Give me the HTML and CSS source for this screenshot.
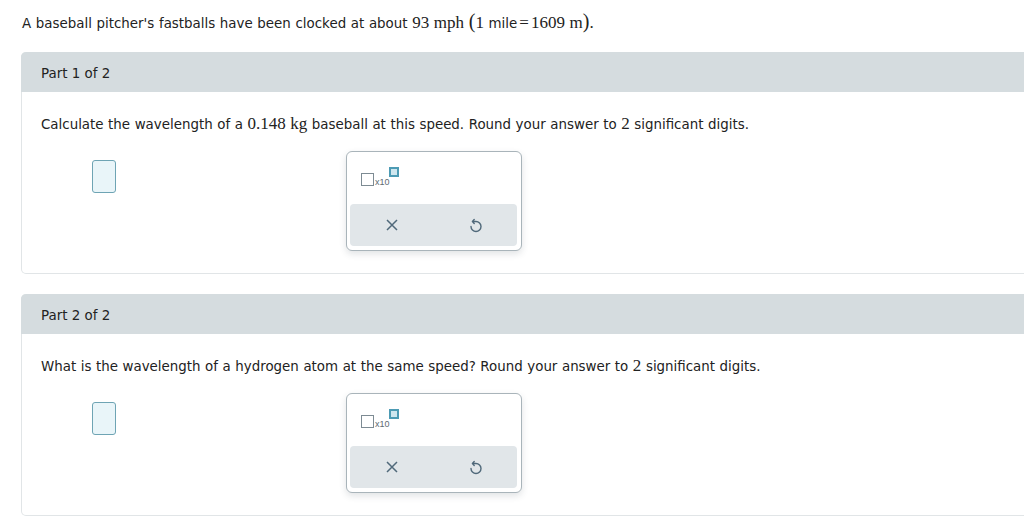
FILE: index.html
```html
<!DOCTYPE html>
<html>
<head>
<meta charset="utf-8">
<link rel="stylesheet" href="styles.css">
</head>
<body>
<p class="intro">A baseball pitcher's fastballs have been clocked at about <span class="m">93 mph</span> <span class="m paren">(</span><span class="m">1</span> mile<span class="m eq">=</span><span class="m">1609 m</span><span class="m paren">)</span><span class="m">.</span></p>

<section class="part">
  <div class="part-head">Part 1 of 2</div>
  <div class="part-body">
    <p class="q">Calculate the wavelength of a <span class="m">0.148 kg</span> baseball at this speed. Round your answer to <span class="m">2</span> significant digits.</p>
    <div class="answer">
      <div class="input"></div>
      <div class="widget">
        <div class="top">
          <div class="sci"><span class="box"></span><span class="x10">x10</span><span class="sup"></span></div>
        </div>
        <div class="bar">
          <div class="btn"><svg width="12" height="12" viewBox="0 0 12 12"><path d="M1 1 L11 11 M11 1 L1 11" stroke="#50697a" stroke-width="1.5" fill="none"/></svg></div>
          <div class="btn"><svg width="14" height="16" viewBox="0 0 14 16"><path d="M3 9.5 A5 5 0 1 0 8 4.5 H4.5 M6.2 2.6 L4.4 4.5 L6.2 6.4" stroke="#50697a" stroke-width="1.4" fill="none" stroke-linecap="round" stroke-linejoin="round"/></svg></div>
        </div>
      </div>
    </div>
  </div>
</section>

<section class="part">
  <div class="part-head">Part 2 of 2</div>
  <div class="part-body">
    <p class="q">What is the wavelength of a hydrogen atom at the same speed? Round your answer to <span class="m">2</span> significant digits.</p>
    <div class="answer">
      <div class="input"></div>
      <div class="widget">
        <div class="top">
          <div class="sci"><span class="box"></span><span class="x10">x10</span><span class="sup"></span></div>
        </div>
        <div class="bar">
          <div class="btn"><svg width="12" height="12" viewBox="0 0 12 12"><path d="M1 1 L11 11 M11 1 L1 11" stroke="#50697a" stroke-width="1.5" fill="none"/></svg></div>
          <div class="btn"><svg width="14" height="16" viewBox="0 0 14 16"><path d="M3 9.5 A5 5 0 1 0 8 4.5 H4.5 M6.2 2.6 L4.4 4.5 L6.2 6.4" stroke="#50697a" stroke-width="1.4" fill="none" stroke-linecap="round" stroke-linejoin="round"/></svg></div>
        </div>
      </div>
    </div>
  </div>
</section>
</body>
</html>
```

FILE: styles.css
```css
html, body {
  margin: 0;
  padding: 0;
  background: #ffffff;
}
body {
  width: 1024px;
  overflow: hidden;
  font-family: "DejaVu Sans", Verdana, sans-serif;
  font-size: 13.4px;
  color: #222222;
}
p {
  margin: 0;
}
.m {
  font-family: "Liberation Serif", "Times New Roman", serif;
  font-size: 17px;
}
.paren {
  font-size: 20px;
}
.eq {
  margin: 0 2px;
}
.intro {
  padding: 13px 0 0 22px;
  height: 52px;
  line-height: 16px;
  box-sizing: border-box;
  word-spacing: 0.4px;
}
.part {
  margin: 0 0 20px 21px;
  width: 1040px;
  border: 1px solid #e1e5e7;
  border-top: none;
  border-radius: 5px;
}
.part-head {
  height: 40px;
  line-height: 43px;
  padding-left: 20px;
  background: #d5dcdf;
  border-radius: 5px 5px 0 0;
  margin: 0 -1px;
  overflow: hidden;
}
.part-body {
  padding: 24px 19px 22px;
}
.q {
  line-height: 16px;
  word-spacing: 0.3px;
}
.answer {
  display: flex;
  align-items: flex-start;
  margin-top: 18px;
}
.input {
  width: 24px;
  height: 33px;
  box-sizing: border-box;
  margin: 9px 0 0 51px;
  border: 1.5px solid #6ea4b4;
  background: #e9f5f9;
  border-radius: 3px;
}
.widget {
  margin-left: 230px;
  width: 176px;
  height: 100px;
  box-sizing: border-box;
  border: 1px solid #a9b4ba;
  border-radius: 6px;
  box-shadow: 0 3px 7px rgba(40, 60, 70, 0.14);
  padding: 0 4px 4px 3px;
  display: flex;
  flex-direction: column;
  background: #ffffff;
}
.top {
  height: 52px;
}
.sci {
  display: flex;
  align-items: flex-start;
  margin: 15px 0 0 11px;
}
.box {
  width: 13px;
  height: 13px;
  box-sizing: border-box;
  border: 1.5px solid #7d8b93;
  margin-top: 6px;
}
.x10 {
  font-family: "Liberation Sans", Arial, sans-serif;
  font-size: 9px;
  line-height: 9px;
  color: #5d6a72;
  margin: 11px 0 0 1px;
}
.sup {
  width: 10px;
  height: 10px;
  box-sizing: border-box;
  border: 2px solid #4d9bb4;
  background: #cfe7ef;
  margin-left: -1px;
}
.bar {
  flex: 1;
  display: flex;
  background: #e1e6e9;
  border-radius: 4px;
}
.btn {
  flex: 1;
  display: flex;
  align-items: center;
  justify-content: center;
}
```
